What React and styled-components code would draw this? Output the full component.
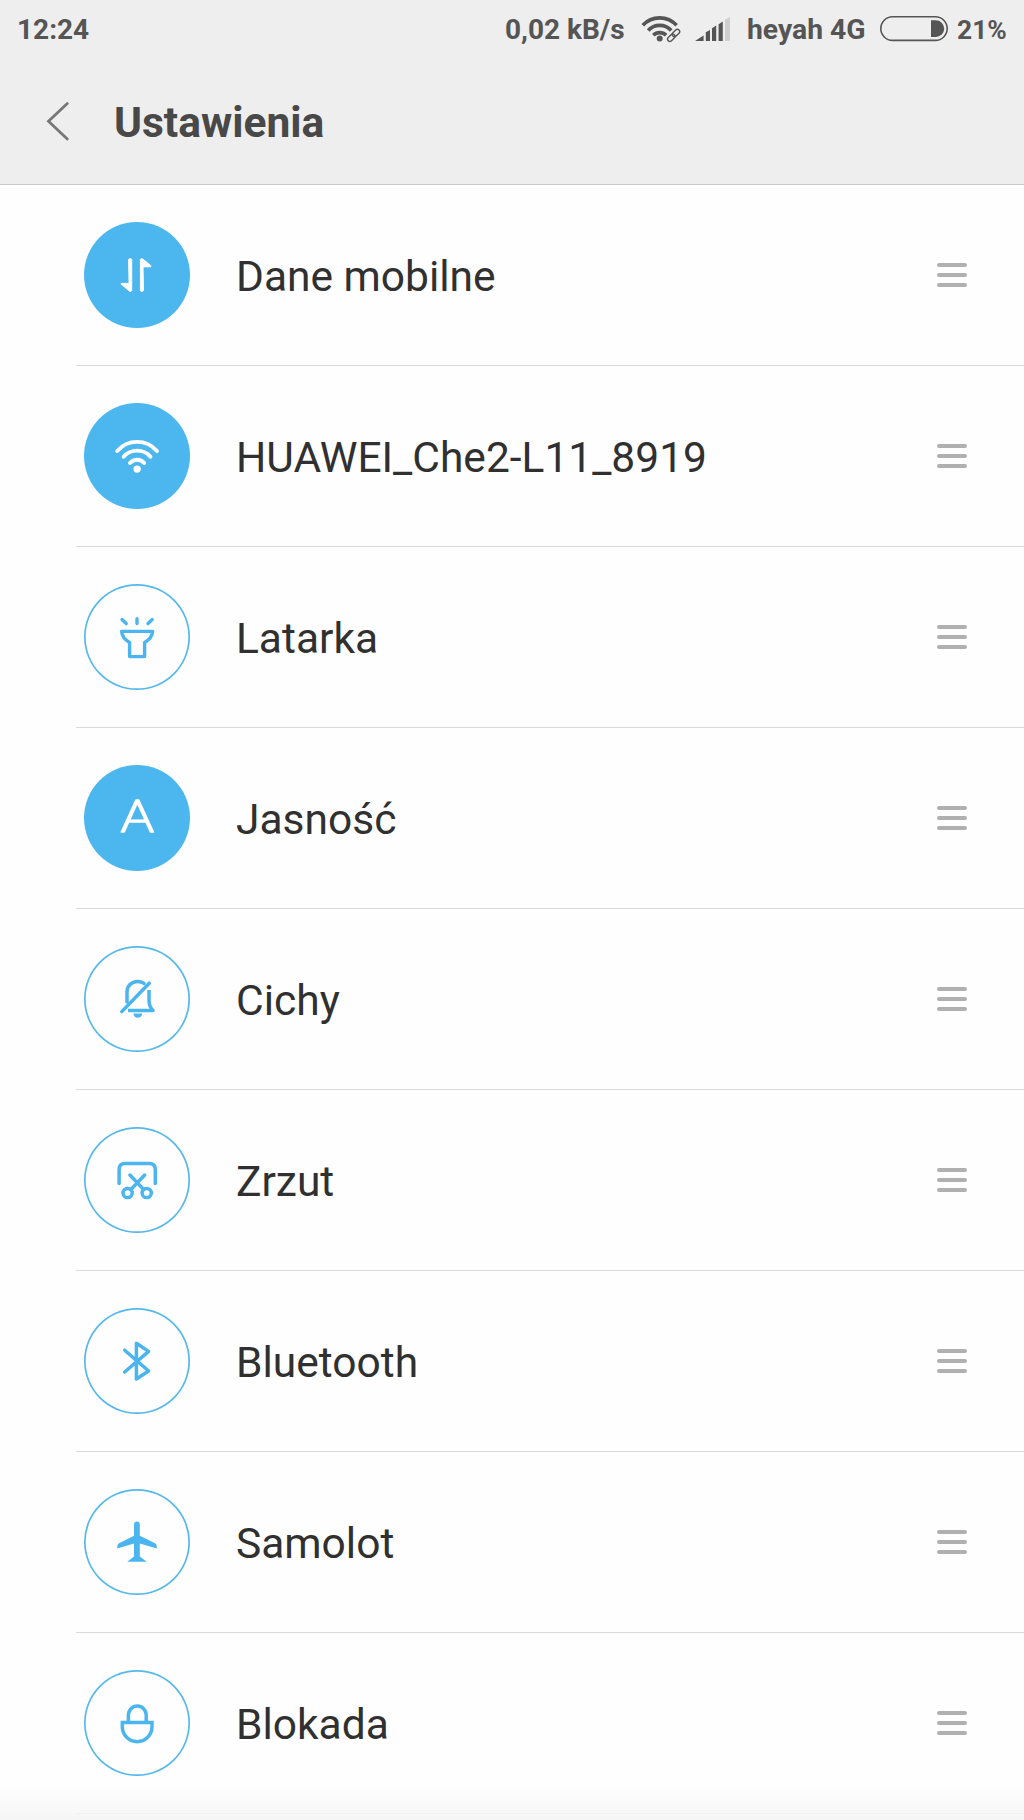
import React from "react";
import styled, { createGlobalStyle } from "styled-components";

const GlobalStyle = createGlobalStyle`
	body {
		margin: 0;
		background: #fefefe;
		font-family: Roboto, "Noto Sans", sans-serif;
	}
`;

const Screen = styled.div`
	width: 1024px;
	height: 1820px;
	overflow: hidden;
	position: relative;
	background: #fefefe;
`;

const Header = styled.header`
	height: 185px;
	box-sizing: border-box;
	background: #eeeeee;
	border-bottom: 1px solid #c9c9c9;
`;

const StatusBar = styled.div`
	display: flex;
	align-items: center;
	height: 58px;
	padding-left: 17px;
	color: #555555;
	white-space: nowrap;

	> svg {
		display: block;
		flex: none;
	}
`;

const StatusText = styled.span`
	width: ${(p) => p.$width}px;
	margin-left: ${(p) => p.$left || 0}px;
	padding-top: 2px;
	box-sizing: border-box;
	flex: none;
	font-size: ${(p) => p.$size || 28}px;
	font-weight: 700;
	line-height: 34px;
`;

const TitleBar = styled.div`
	display: flex;
	align-items: center;
	height: 126px;
	padding-left: 44px;
	box-sizing: border-box;
`;

const BackButton = styled.button`
	display: flex;
	width: 28px;
	height: 44px;
	padding: 0;
	border: none;
	background: none;
`;

const Title = styled.h1`
	margin: 4px 0 0 42px;
	color: #484848;
	font-size: 42.5px;
	font-weight: 700;
	line-height: 50px;
`;

const List = styled.ul`
	margin: 0;
	padding: 0 0 0 76px;
	list-style: none;
`;

const Row = styled.li`
	display: flex;
	align-items: center;
	height: 181px;
	box-sizing: border-box;
	padding: 0 57px 0 8.4px;
	border-bottom: 1px solid #dadada;
`;

const Circle = styled.div`
	width: 106px;
	height: 106px;
	flex: none;
	box-sizing: border-box;
	border-radius: 50%;
	color: ${(p) => (p.$active ? "#ffffff" : "#4ab5ee")};
	background: ${(p) => (p.$active ? "#4cb6ef" : "transparent")};
	box-shadow: ${(p) => (p.$active ? "none" : "inset 0 0 0 1.7px #55b8ec")};

	svg {
		display: block;
	}
`;

const Letter = styled.text`
	font-family: Lato, Roboto, sans-serif;
	font-size: 46px;
	font-weight: 300;
`;

const Label = styled.span`
	flex: 1;
	margin-left: 45.6px;
	padding-top: 3px;
	color: #303030;
	font-size: 42.5px;
	line-height: 56px;
`;

const Handle = styled.div`
	display: flex;
	flex-direction: column;
	gap: 6.6px;
	width: 30px;

	> div {
		height: 3.8px;
		border-radius: 2px;
		background: #b0b0b0;
	}
`;

const BottomFade = styled.div`
	position: absolute;
	left: 0;
	right: 0;
	bottom: 0;
	height: 36px;
	background: linear-gradient(to bottom, rgba(246, 246, 246, 0), #f6f6f6);
`;

// every glyph is drawn on the full 106px circle
const Glyph = ({ children, width = 3.5 }) => (
	<svg
		width="106"
		height="106"
		viewBox="0 0 106 106"
		fill="none"
		stroke="currentColor"
		strokeWidth={width}
		strokeLinecap="round"
		strokeLinejoin="round"
	>
		{children}
	</svg>
);

const DataIcon = () => (
	<Glyph width={1}>
		<path
			fill="currentColor"
			d="M44.8 37.2Q46.3 35.8 47.7 37.2V68.6Q47.2 70.2 45.4 69L37.2 62.2V61.4H44.8Z"
		/>
		<path
			fill="currentColor"
			d="M59.3 68.8Q57.9 70.2 56.4 68.8V37.4Q57 35.8 58.7 37L67 43.8V44.8H59.3Z"
		/>
	</Glyph>
);

const WifiIcon = () => (
	<Glyph width={3.9}>
		<path d="M33.2 48A26.3 26.3 0 0 1 73 48M39.6 53.8A17.8 17.8 0 0 1 66.5 53.8M46 60A9.5 9.5 0 0 1 60.2 60" />
		<circle cx="53.1" cy="66.1" r="3.7" fill="currentColor" stroke="none" />
	</Glyph>
);

const TorchIcon = () => (
	<Glyph width={3.4}>
		<path d="M38 35.6L42.2 39.6M53 34.8V39.6M68.2 35.6L64 39.6" />
		<path d="M37.6 47.4H68.7Q68 54.5 60.6 58.4V72.6H45.6V58.4Q38.2 54.5 37.6 47.4Z" />
	</Glyph>
);

const AutoIcon = () => (
	<Glyph width={1.6}>
		<g transform="translate(53.4 67.2) scale(1.1 1)">
			<Letter x="0" y="0" textAnchor="middle" fill="currentColor">
				A
			</Letter>
		</g>
	</Glyph>
);

const MuteIcon = () => (
	<Glyph>
		<path d="M37.8 65.6L65.2 37.2" />
		<path d="M43 56V45.5A10.8 10.2 0 0 1 60 37.4" />
		<path strokeLinecap="butt" d="M65 44V55Q65.2 60.5 69 64.5H44" />
		<path stroke="none" fill="currentColor" d="M49.4 67.6H58.2A4.4 4.2 0 0 1 49.4 67.6Z" />
	</Glyph>
);

const ScreenshotIcon = () => (
	<Glyph>
		<path d="M35.1 56.6V42.6Q35.1 36.6 41.1 36.6H65.3Q71.3 36.6 71.3 42.6V56.6" />
		<path d="M45.9 48L59.6 62.4M60.7 48L47 62.4" />
		<circle cx="43.6" cy="66" r="4.6" />
		<circle cx="62.7" cy="66" r="4.6" />
	</Glyph>
);

const BluetoothIcon = () => (
	<Glyph>
		<path d="M40.7 42.2L64.6 63L52.4 71V35.2L64.6 43.4L40.7 64" />
	</Glyph>
);

const PlaneIcon = () => (
	<Glyph>
		<path
			stroke="none"
			fill="currentColor"
			d="M50 35.6Q50 32.6 52.9 32.6Q55.8 32.6 55.8 35.6V46.7L71 54.3Q72.8 55.4 72.8 57.4V59.6L55.8 54.6V67.4L62.7 72.8H43.3L50 67.4V54.6L33.3 59.6V57.4Q33.3 55.4 35 54.3L50 46.7Z"
		/>
	</Glyph>
);

const LockIcon = () => (
	<Glyph>
		<path d="M44.4 52V45A8.9 8.9 0 0 1 62.2 45V52" />
		<path strokeLinejoin="miter" d="M38.3 52.4H68V56.8A14.85 14.85 0 0 1 38.3 56.8Z" />
	</Glyph>
);

const items = [
	{ label: "Dane mobilne", icon: DataIcon, active: true },
	{ label: "HUAWEI_Che2-L11_8919", icon: WifiIcon, active: true },
	{ label: "Latarka", icon: TorchIcon },
	{ label: "Jasność", icon: AutoIcon, active: true },
	{ label: "Cichy", icon: MuteIcon },
	{ label: "Zrzut", icon: ScreenshotIcon },
	{ label: "Bluetooth", icon: BluetoothIcon },
	{ label: "Samolot", icon: PlaneIcon },
	{ label: "Blokada", icon: LockIcon },
];

const StatusWifi = () => (
	<svg width="40" height="58" viewBox="0 0 40 58" fill="none" stroke="#555555">
		<path
			strokeWidth="3.7"
			d="M1.8 25.2A23 23 0 0 1 35.6 25.2M7.2 30.4A15.6 15.6 0 0 1 30.2 30.4M12.3 35.2A9 9 0 0 1 25.1 35.2"
		/>
		<circle cx="18.7" cy="38.5" r="3" fill="#555555" stroke="none" />
		{/* tethering link */}
		<g transform="rotate(-45 32.6 35.4)">
			<rect x="23.6" y="31" width="18" height="8.8" rx="4.4" fill="#eeeeee" stroke="none" />
			<g strokeWidth="1.4">
				<rect x="25" y="33.1" width="8.6" height="4.6" rx="2.3" />
				<rect x="31.6" y="33.1" width="8.6" height="4.6" rx="2.3" />
			</g>
		</g>
	</svg>
);

const Signal = styled.svg`
	margin-left: 14px;
`;

const StatusSignal = () => (
	<Signal width="35" height="58" viewBox="0 0 35 58" fill="#555555">
		<path d="M0 41L8.6 35.4V41ZM10.8 32.2L15 30V41H10.8ZM17 28.2L21.2 25.6V41H17ZM23.6 24.2L27.8 21.4V41H23.6Z" />
		<path fill="#cfcfcf" d="M30 19.8L35 17V41H30Z" />
	</Signal>
);

const StatusBattery = () => (
	<svg width="68" height="58" viewBox="0 0 68 58">
		<rect x="0.8" y="16.8" width="66.4" height="23.6" rx="11.8" fill="none" stroke="#555555" strokeWidth="1.6" />
		<path fill="#555555" d="M51 20.2H55.8A8.4 8.4 0 0 1 55.8 37H51Z" />
	</svg>
);

const App = () => {
	return (
		<Screen>
			<GlobalStyle />
			<Header>
				<StatusBar>
					<StatusText $width={485}>12:24</StatusText>
					<StatusText $width={136} $left={3} $size={28}>
						0,02 kB/s
					</StatusText>
					<StatusWifi />
					<StatusSignal />
					<StatusText $width={133} $left={17} $size={28.3}>
						heyah 4G
					</StatusText>
					<StatusBattery />
					<StatusText $width={60} $left={9} $size={26.4}>
						21%
					</StatusText>
				</StatusBar>
				<TitleBar>
					<BackButton aria-label="Wstecz">
						<svg width="28" height="44" viewBox="0 0 28 44" fill="none" stroke="#777777" strokeWidth="2.8">
							<path strokeLinecap="round" d="M23.3 4.6L4.5 22.3L23.3 40" />
						</svg>
					</BackButton>
					<Title>Ustawienia</Title>
				</TitleBar>
			</Header>
			<List>
				{items.map(({ label, icon: Icon, active }) => (
					<Row key={label}>
						<Circle $active={active}>
							<Icon />
						</Circle>
						<Label>{label}</Label>
						<Handle>
							<div />
							<div />
							<div />
						</Handle>
					</Row>
				))}
			</List>
			<BottomFade />
		</Screen>
	);
};

export default App;
